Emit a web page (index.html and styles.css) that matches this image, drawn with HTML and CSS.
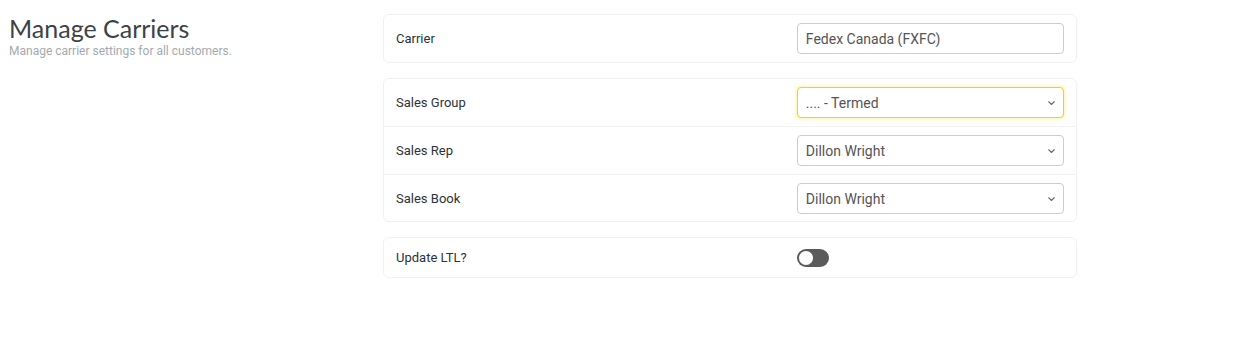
FILE: index.html
```html
<!DOCTYPE html>
<html lang="en">
<head>
    <meta charset="UTF-8">
    <meta name="viewport" content="width=device-width, initial-scale=1.0">
    <title>Manage Carriers</title>
    <link rel="stylesheet" href="styles.css">
</head>
<body>
    <div class="page">
        <div class="page-header">
            <h1>Manage Carriers</h1>
            <p class="subtitle">Manage carrier settings for all customers.</p>
        </div>

        <div class="settings">
            <div class="card">
                <div class="row">
                    <label class="label" for="carrier">Carrier</label>
                    <input class="control" type="text" id="carrier" value="Fedex Canada (FXFC)">
                </div>
            </div>

            <div class="card">
                <div class="row">
                    <label class="label">Sales Group</label>
                    <div class="select focused">
                        <span>.... - Termed</span>
                        <svg class="chevron" viewBox="0 0 7 4" width="7" height="4"><path d="M0.5 0.5l3 3 3-3" fill="none" stroke="#666" stroke-width="1.1"/></svg>
                    </div>
                </div>
                <div class="row">
                    <label class="label">Sales Rep</label>
                    <div class="select">
                        <span>Dillon Wright</span>
                        <svg class="chevron" viewBox="0 0 7 4" width="7" height="4"><path d="M0.5 0.5l3 3 3-3" fill="none" stroke="#666" stroke-width="1.1"/></svg>
                    </div>
                </div>
                <div class="row">
                    <label class="label">Sales Book</label>
                    <div class="select">
                        <span>Dillon Wright</span>
                        <svg class="chevron" viewBox="0 0 7 4" width="7" height="4"><path d="M0.5 0.5l3 3 3-3" fill="none" stroke="#666" stroke-width="1.1"/></svg>
                    </div>
                </div>
            </div>

            <div class="card">
                <div class="row row-small">
                    <span class="label">Update LTL?</span>
                    <div><span class="toggle"><span class="knob"></span></span></div>
                </div>
            </div>
        </div>
    </div>
</body>
</html>
```

FILE: styles.css
```css
body {
    margin: 0;
    font-family: Roboto, "Noto Sans", sans-serif;
    background: #fff;
    color: #2d333a;
}

.page {
    display: flex;
    padding: 14px 0 0 9px;
}

.page-header {
    width: 374px;
    flex-shrink: 0;
}

h1 {
    margin: 0;
    font-family: Lato, Roboto, sans-serif;
    font-size: 25px;
    font-weight: 400;
    line-height: 28px;
    color: #3d4249;
}

.subtitle {
    margin: 2px 0 0;
    font-size: 12px;
    color: #a5aab0;
}

.settings {
    width: 694px;
    display: flex;
    flex-direction: column;
    gap: 15px;
}

.card {
    border: 1px solid #f1f1f1;
    border-radius: 6px;
}

.row {
    display: grid;
    grid-template-columns: 3fr 2fr;
    align-items: center;
    padding: 8px 12px;
    height: 31px;
}

.row + .row {
    border-top: 1px solid #f3f3f3;
}

.row + .row:last-child {
    padding-bottom: 7px;
}

.row-small {
    padding: 4px 12px;
}

.label {
    font-size: 13px;
    color: #2d333a;
}

.control,
.select {
    box-sizing: border-box;
    height: 31px;
    width: 100%;
    border: 1px solid #ccc;
    border-radius: 4px;
    padding: 0 8px 0 8px;
    font-family: inherit;
    font-size: 14px;
    color: #555;
    background: #fff;
}

.select {
    display: flex;
    align-items: center;
    justify-content: space-between;
}

.select.focused {
    border-color: #f2d40c;
    box-shadow: 0 0 4px rgba(250, 220, 20, 0.55);
}

.toggle {
    display: inline-block;
    position: relative;
    width: 32px;
    height: 18px;
    border-radius: 9px;
    background: #5b5b5b;
    vertical-align: middle;
}

.knob {
    position: absolute;
    left: 2px;
    top: 2px;
    width: 14px;
    height: 14px;
    border-radius: 50%;
    background: #fff;
}
```
